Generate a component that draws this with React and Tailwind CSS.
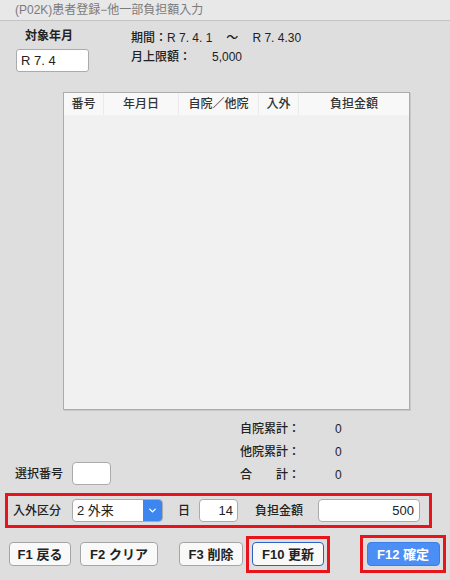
import React from 'react';
import { ChevronDown } from 'lucide-react';

const font = { fontFamily: '"Liberation Sans", "Noto Sans CJK JP", sans-serif' };

const cols = [
  { label: '番号', w: 'w-[40px]' },
  { label: '年月日', w: 'w-[75px]' },
  { label: '自院／他院', w: 'w-[80px]' },
  { label: '入外', w: 'w-[40px]' },
  { label: '負担金額', w: 'flex-1' },
];

function Btn({ children, className = '' }) {
  return (
    <button
      className={`h-[24px] rounded-[4px] border text-[13px] font-semibold leading-none ${className}`}
    >
      {children}
    </button>
  );
}

export default function App() {
  return (
    <div className="w-[450px] h-[580px] bg-[#dedede] flex flex-col text-[#222]" style={font}>
      {/* title bar */}
      <div className="h-[21px] bg-[#e8e8e8] border-b border-[#c4c4c4] pl-[15px] text-[12px] leading-[20px] text-[#7b7b7b]">
        (P02K)患者登録−他一部負担額入力
      </div>

      {/* target month / period */}
      <div className="flex pt-[7px]">
        <div className="ml-[16px] w-[73px] flex flex-col">
          <div className="pl-[9px] h-[16px] text-[12px] leading-[16px] font-semibold">対象年月</div>
          <div className="mt-[5px] h-[23px] w-[73px] bg-white border border-[#ababab] rounded-[3px] px-[4px] text-[13px] leading-[21px]">
            R 7. 4
          </div>
        </div>
        <div className="ml-[42px] pt-[2px] text-[12px] leading-[16px] font-medium">
          <div className="flex">
            <span>期間：R 7. 4. 1</span>
            <span className="ml-[14px]">〜</span>
            <span className="ml-[14px]">R 7. 4.30</span>
          </div>
          <div className="flex mt-[3px]">
            <span className="w-[81px]">月上限額：</span>
            <span>5,000</span>
          </div>
        </div>
      </div>

      {/* table */}
      <div className="mt-[20px] ml-[63px] w-[347px] h-[318px] border border-[#acacac] shadow-[1px_1px_0_#c8c8c8] bg-[#f1f1f1] flex flex-col">
        <div className="flex h-[22px] bg-[#f8f8f8]">
          {cols.map((c, i) => (
            <div
              key={c.label}
              className={`${c.w} flex items-center justify-center text-[12px] font-medium text-[#333] ${i < cols.length - 1 ? 'border-r border-[#ebebeb]' : ''}`}
            >
              {c.label}
            </div>
          ))}
        </div>
      </div>

      {/* totals + selection */}
      <div className="flex mt-[7px]">
        <div className="ml-[15px] w-[225px] flex items-end">
          <div className="flex items-center mb-[1px]">
            <span className="w-[57px] text-[12px] font-medium">選択番号</span>
            <div className="w-[39px] h-[23px] bg-white border border-[#ababab] rounded-[4px]" />
          </div>
        </div>
        <div className="text-[12px] font-medium">
          <div className="flex h-[23px] items-center">
            <span className="w-[95px]">自院累計：</span>
            <span>0</span>
          </div>
          <div className="flex h-[23px] items-center">
            <span className="w-[95px]">他院累計：</span>
            <span>0</span>
          </div>
          <div className="flex h-[23px] items-center">
            <span className="w-[95px] flex">
              <span>合</span>
              <span className="ml-[24px]">計：</span>
            </span>
            <span>0</span>
          </div>
        </div>
      </div>

      {/* input row */}
      <div className="mt-[7px] ml-[5px] w-[427px] h-[35px] border-[3px] border-[#e8141c] flex items-center">
        <span className="ml-[5px] w-[59px] text-[12px] font-medium">入外区分</span>
        <div className="w-[91px] h-[23px] bg-white border border-[#ababab] rounded-[4px] flex overflow-hidden">
          <span className="flex-1 pl-[4px] text-[13px] leading-[21px]">2 外来</span>
          <span className="w-[19px] bg-[#3d86f0] flex items-center justify-center">
            <ChevronDown size={11} strokeWidth={3} color="#fff" />
          </span>
        </div>
        <span className="ml-[15px] w-[21px] text-[12px] font-medium">日</span>
        <div className="w-[39px] h-[23px] bg-white border border-[#ababab] rounded-[4px] pr-[4px] text-right text-[13px] leading-[21px]">
          14
        </div>
        <span className="ml-[17px] w-[63px] text-[12px] font-medium">負担金額</span>
        <div className="w-[102px] h-[23px] bg-white border border-[#ababab] rounded-[4px] pr-[5px] text-right text-[13px] leading-[21px]">
          500
        </div>
      </div>

      {/* buttons */}
      <div className="mt-[7px] flex items-center">
        <Btn className="ml-[9px] w-[62px] bg-[#f9f9f9] border-[#a5a5a5]">F1 戻る</Btn>
        <Btn className="ml-[9px] w-[78px] bg-[#f9f9f9] border-[#a5a5a5]">F2 クリア</Btn>
        <Btn className="ml-[21px] w-[64px] bg-[#f9f9f9] border-[#a5a5a5]">F3 削除</Btn>
        <div className="ml-[3px] w-[84px] h-[37px] border-[3px] border-[#e8141c] flex items-center justify-center">
          <Btn className="w-[72px] bg-[#f9f9f9] border-[1.5px] border-[#2e5fc4]">F10 更新</Btn>
        </div>
        <div className="ml-[30px] w-[86px] h-[38px] border-[3px] border-[#e8141c] flex items-center justify-center">
          <Btn className="w-[73px] bg-[#4a8ef6] border-[#3a7ee6] text-white">F12 確定</Btn>
        </div>
      </div>
    </div>
  );
}
